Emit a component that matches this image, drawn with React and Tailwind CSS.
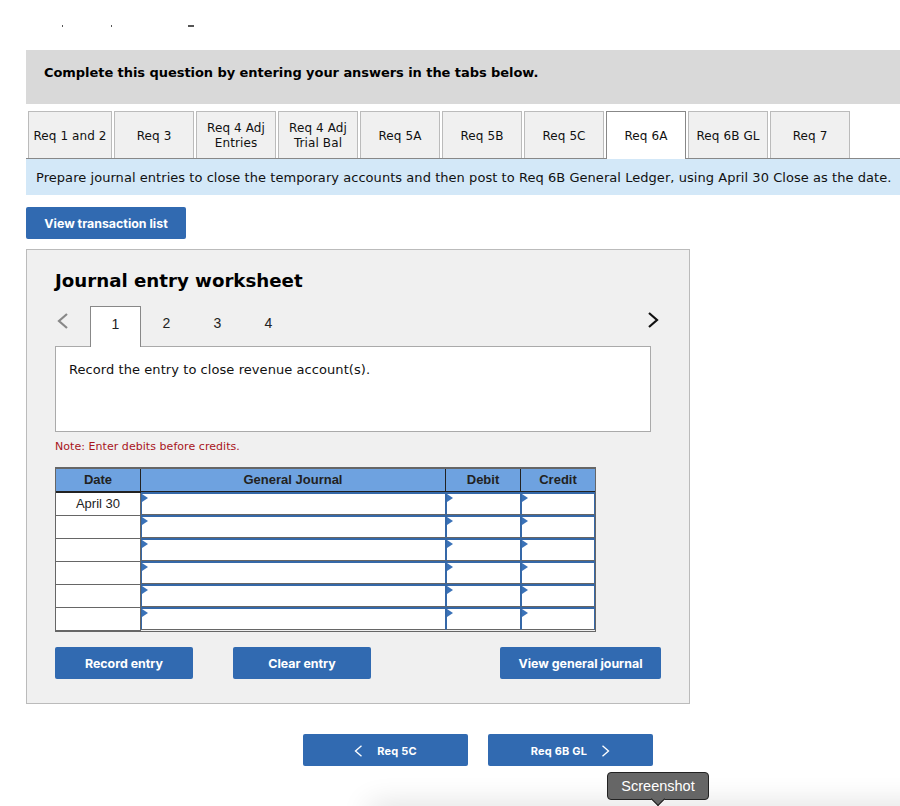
const reqTabs = [
  { label: "Req 1 and 2", w: "w-[84px]" },
  { label: "Req 3", w: "w-[80px]" },
  { label: "Req 4 Adj Entries", w: "w-[80px]" },
  { label: "Req 4 Adj Trial Bal", w: "w-[80px]" },
  { label: "Req 5A", w: "w-[80px]" },
  { label: "Req 5B", w: "w-[80px]" },
  { label: "Req 5C", w: "w-[80px]" },
  { label: "Req 6A", w: "w-[80px]", active: true },
  { label: "Req 6B GL", w: "w-[80px]" },
  { label: "Req 7", w: "w-[80px]" },
];

const rows = ["April 30", "", "", "", "", ""];

function BlueButton({ children, className }) {
  return (
    <button className={"flex items-center justify-center rounded-[2px] bg-[#316ab1] pt-[2px] text-white font-['Inter',sans-serif] font-bold " + className}>
      {children}
    </button>
  );
}

function Chevron({ left, className, size = "h-[16px] w-[12px]", width = 2.2 }) {
  return (
    <svg viewBox="0 0 12 16" fill="none" className={size + " " + className}>
      <polyline points={left ? "10,1 2,8 10,15" : "2,1 10,8 2,15"} stroke="currentColor" strokeWidth={width} />
    </svg>
  );
}

function EntryCell() {
  return (
    <div className="-mt-[1px] h-[23px] border-x-[1.5px] border-t-[2px] border-b-[1px] border-[#3568a8] border-b-[#666] bg-white">
      <div className="h-0 w-0 border-y-[4px] border-l-[6px] border-y-transparent border-l-[#3a72b8]" />
    </div>
  );
}

function JournalTable() {
  return (
    <div className="mt-[13px] w-[541px] border-x-[1px] border-t-[2px] border-b-[1px] border-[#666] font-['Liberation_Sans',sans-serif] text-[13px] text-[#222]">
      <div className="grid h-[24px] grid-cols-[85px_305px_75px_74px] border-b-[2px] border-[#222] bg-[#6ea2e0] text-center font-bold leading-[21px]">
        <div className="border-r-[1px] border-[#222]">Date</div>
        <div className="border-r-[1px] border-[#222]">General Journal</div>
        <div className="border-r-[1px] border-[#222]">Debit</div>
        <div>Credit</div>
      </div>
      {rows.map((date, idx) => (
        <div key={idx} className="grid h-[23px] grid-cols-[85px_305px_75px_74px]">
          <div className="h-[23px] border-r-[1px] border-b-[1px] border-[#666] bg-white text-center leading-[21px]">{date}</div>
          <EntryCell />
          <EntryCell />
          <EntryCell />
        </div>
      ))}
    </div>
  );
}

export default function App() {
  return (
    <div className="relative h-[806px] w-[900px] overflow-hidden bg-white font-['DejaVu_Sans',sans-serif] text-black">
      <div className="flex h-[50px] items-start pl-[62px] pt-[25px]">
        <span className="h-[2px] w-[1px] bg-[#555]" />
        <span className="ml-[48px] h-[2px] w-[1px] bg-[#555]" />
        <span className="ml-[76px] h-[2px] w-[6px] bg-[#555]" />
      </div>

      <div className="ml-[26px]">
        <div className="h-[54px] bg-[#d9d9d9] pl-[18px] pt-[14px] text-[13px] font-bold leading-[18px] tracking-[-0.06px]">
          Complete this question by entering your answers in the tabs below.
        </div>

        <div className="mt-[7px] flex h-[48px] gap-[2px] border-b border-[#888] pl-[2px]">
          {reqTabs.map((tab) => (
            <div
              key={tab.label}
              className={
                tab.active
                  ? "z-10 flex h-[48px] items-center justify-center border border-b-0 border-[#888] bg-white px-1 pt-[2px] text-center text-[12px] leading-[15px] tracking-[0.1px] text-[#111] " + tab.w
                  : "flex h-[47px] items-center justify-center border border-b-0 border-[#bbb] bg-[#f0f0f0] px-1 pt-[2px] text-center text-[12px] leading-[15px] tracking-[0.1px] text-[#111] " + tab.w
              }
            >
              {tab.label}
            </div>
          ))}
        </div>

        <div className="flex h-[36px] items-center whitespace-nowrap bg-[#d3e8f8] pl-[10px] pt-[2px] text-[13px] tracking-[0.05px] text-[#111]">
          Prepare journal entries to close the temporary accounts and then post to Req 6B General Ledger, using April 30 Close as the date.
        </div>

        <BlueButton className="mt-[12px] h-[32px] w-[160px] text-[12.4px]">View transaction list</BlueButton>

        <div className="mt-[10px] h-[455px] w-[664px] border border-[#bbb] bg-[#f0f0f0] pl-[28px]">
          <h2 className="pt-[18px] text-[18.2px] font-bold leading-[26px]">Journal entry worksheet</h2>

          <div className="mt-[12px] flex h-[40px] w-[596px] items-start">
            <Chevron left className="ml-[2px] mr-[21px] mt-[7px] text-[#888]" />
            <div className="z-10 flex h-[41px] w-[51px] justify-center border border-b-0 border-[#888] bg-white pt-[7px] font-['Liberation_Sans',sans-serif] text-[14px] text-[#222]">1</div>
            {["2", "3", "4"].map((n) => (
              <div key={n} className="flex h-[34px] w-[51px] justify-center pt-[7px] font-['Liberation_Sans',sans-serif] text-[14px] text-[#222]">{n}</div>
            ))}
            <Chevron className="ml-auto -mr-[8px] mt-[6px] text-[#111]" />
          </div>

          <div className="h-[86px] w-[596px] border border-[#aaa] bg-white pl-[13px] pt-[14px] text-[13px] leading-[18px] tracking-[0.07px] text-[#111]">
            Record the entry to close revenue account(s).
          </div>

          <p className="mt-[7px] text-[11px] leading-[15px] tracking-[0.05px] text-[#a8141b]">Note: Enter debits before credits.</p>

          <JournalTable />

          <div className="mt-[15px] flex w-[606px]">
            <BlueButton className="h-[32px] w-[138px] text-[12.4px]">Record entry</BlueButton>
            <BlueButton className="ml-[40px] h-[32px] w-[138px] text-[12.4px]">Clear entry</BlueButton>
            <BlueButton className="ml-auto h-[32px] w-[161px] text-[12.4px]">View general journal</BlueButton>
          </div>
        </div>

        <div className="ml-[277px] mt-[30px] flex gap-[20px]">
          <BlueButton className="h-[32px] w-[165px] gap-[14px] text-[11px] tracking-[0.2px]">
            <Chevron left size="h-[12px] w-[9px]" width={1.8} />
            Req 5C
          </BlueButton>
          <BlueButton className="h-[32px] w-[165px] gap-[14px] text-[11px] tracking-[0.2px]">
            Req 6B GL
            <Chevron size="h-[12px] w-[9px]" width={1.8} />
          </BlueButton>
        </div>
      </div>

      <div className="absolute left-[370px] top-[806px] h-[20px] w-[600px] shadow-[0_0_30px_rgba(0,0,0,0.16)]" />

      <div className="absolute left-[607px] top-[772px] z-20 h-[28px] w-[102px] rounded-[4px] border border-[#222] bg-[#666] text-center font-['Liberation_Sans',sans-serif] text-[14.5px] leading-[26px] text-white">
        Screenshot
      </div>
      <div className="absolute left-[653px] top-[794px] z-20 h-[10px] w-[10px] rotate-45 border-b border-r border-[#222] bg-[#666]" />
    </div>
  );
}
